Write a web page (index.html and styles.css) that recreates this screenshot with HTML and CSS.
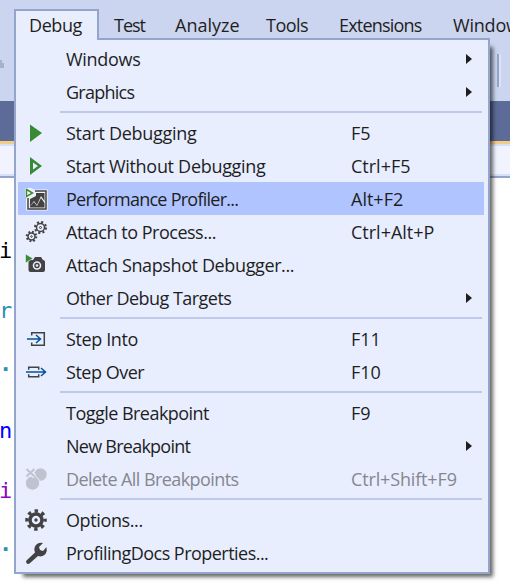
FILE: index.html
```html
<!DOCTYPE html>
<html lang="en">
<head>
<meta charset="utf-8">
<title>Debug menu</title>
<link rel="stylesheet" href="styles.css">
</head>
<body>
<div class="window">
  <header class="chrome"></header>
  <div class="tabstrip"></div>
  <div class="navbar"></div>
  <main class="editor">
    <span class="plain">i</span>
    <span class="type">r</span>
    <span class="type dot">·</span>
    <span class="keyword">n</span>
    <span class="purple">i</span>
    <span class="type dot">·</span>
  </main>
</div>
<svg class="grip" width="4" height="9" viewBox="0 0 4 9"><path d="M0 0h2v3h2v5H0z" fill="#a9afc4"/></svg>
<i class="toolbar-rule"></i>
<div class="overlay">
  <nav class="menubar">
    <span class="title active">Debug</span>
    <span class="title test">Test</span>
    <span class="title analyze">Analyze</span>
    <span class="title tools">Tools</span>
    <span class="title extensions">Extensions</span>
    <span class="title window-title">Window</span>
  </nav>
  <div class="menu">
    <div class="item"><span class="icon"></span><span class="label t3">Windows</span><span class="key"></span><i class="arrow"></i></div>
    <div class="item"><span class="icon"></span><span class="label t7">Graphics</span><span class="key"></span><i class="arrow"></i></div>
    <hr>
    <div class="item"><span class="icon"><svg width="24" height="24"><path d="M6 3.500L18 12L6 21z" fill="#388a34"/></svg></span><span class="label t3">Start Debugging</span><span class="key">F5</span></div>
    <div class="item"><span class="icon"><svg width="24" height="24"><path fill-rule="evenodd" d="M6 3L18 12L6 21zM9 8.500v7l5-3.500z" fill="#388a34"/></svg></span><span class="label t3">Start Without Debugging</span><span class="key">Ctrl+F5</span></div>
    <div class="item selected"><span class="icon"><svg width="24" height="24"><path d="M1 1h6l3 1.500h13.700v21H2V10H1z" fill="#f0f1f5"/><path d="M11 4h11v18H4V11" fill="none" stroke="#424242" stroke-width="1.500"/><path d="M6 12l6-3V6h8.500v8l-3.500-5-4 9-3-4-4 5z" fill="#424242"/><path d="M6 20.500v-1.500l4-4 3 4 4-8 3.500 5v4.500z" fill="#424242"/><path d="M2.500 2.500l6 3.500-6 3.500z" fill="#fff" stroke="#388a34" stroke-width="1.500"/></svg></span><span class="label t7">Performance Profiler...</span><span class="key">Alt+F2</span></div>
    <div class="item"><span class="icon"><svg width="24" height="24" fill="none" stroke="#424242"><circle cx="16.500" cy="7.500" r="4" stroke-width="1.500"/><circle cx="16.500" cy="7.500" r="5.500" stroke-width="2" stroke-dasharray="2.100 2.220"/><circle cx="16.500" cy="7.500" r="1" stroke-width="1"/><circle cx="7.500" cy="16.500" r="3.500" stroke-width="1.500"/><circle cx="7.500" cy="16.500" r="4.800" stroke-width="2" stroke-dasharray="1.800 1.970"/><circle cx="7.500" cy="16.500" r=".8" stroke-width="1"/></svg></span><span class="label t45">Attach to Process...</span><span class="key">Ctrl+Alt+P</span></div>
    <div class="item"><span class="icon"><svg width="24" height="24"><path d="M4.500 9q0-2 2-2H9l2-3h6l2 3q2 0 2 2v8q0 2-2 2H6.500q-2 0-2-2v-5z" fill="#424242"/><circle cx="13" cy="12.500" r="3.500" fill="#424242" stroke="#e8eefe" stroke-width="1.600"/><circle cx="13" cy="12.500" r="1.300" fill="#e8eefe"/><path d="M1.500 1l7.500 4.500-7.500 4.500z" fill="#388a34" stroke="#e8eefe" stroke-width=".6"/></svg></span><span class="label t4">Attach Snapshot Debugger...</span><span class="key"></span></div>
    <div class="item"><span class="icon"></span><span class="label t5">Other Debug Targets</span><span class="key"></span><i class="arrow"></i></div>
    <hr>
    <div class="item"><span class="icon"><svg width="24" height="24" fill="none"><path d="M7.700 8.500V5.700h12.600v12.600H7.700V15.500" stroke="#424242" stroke-width="1.500"/><path d="M3 12h13M12 8l4.500 4-4.500 4" stroke="#00539c" stroke-width="1.500"/></svg></span><span class="label t4">Step Into</span><span class="key">F11</span></div>
    <div class="item"><span class="icon"><svg width="24" height="24" fill="none"><path d="M4.700 9.700V7.200h10v2.500M4.700 14.300v2.500h10v-2.500" stroke="#424242" stroke-width="1.500"/><path d="M2 12h19M17 8l4.500 4-4.500 4" stroke="#00539c" stroke-width="1.500"/></svg></span><span class="label t45">Step Over</span><span class="key">F10</span></div>
    <hr>
    <div class="item"><span class="icon"></span><span class="label t5">Toggle Breakpoint</span><span class="key">F9</span></div>
    <div class="item"><span class="icon"></span><span class="label t7">New Breakpoint</span><span class="key"></span><i class="arrow"></i></div>
    <div class="item disabled"><span class="icon"><svg width="24" height="24"><circle cx="16.500" cy="7.500" r="6.200" fill="#bfc3cf"/><circle cx="8.500" cy="16" r="7.200" fill="#bfc3cf" stroke="#e8eefe"/><path d="M2.500 2l8 7.500M10.500 2l-8 7.500" stroke="#e8eefe" stroke-width="4.500"/><path d="M2.500 2l8 7.500M10.500 2l-8 7.500" stroke="#bfc3cf" stroke-width="2"/></svg></span><span class="label t55">Delete All Breakpoints</span><span class="key long">Ctrl+Shift+F9</span></div>
    <hr>
    <div class="item"><span class="icon"><svg width="24" height="24" fill="none" stroke="#424242"><circle cx="12" cy="12" r="6" stroke-width="3.500"/><circle cx="12" cy="12" r="9" stroke-width="3.500" stroke-dasharray="3.400 3.670" stroke-dashoffset="1.700"/><circle cx="12" cy="12" r="1.700" fill="#424242" stroke="none"/></svg></span><span class="label t4">Options...</span><span class="key"></span></div>
    <div class="item"><span class="icon"><svg width="24" height="24"><path d="M2.500 19.500L11 11.500Q9 6 13 3q3-2 6-1l-4 4 1 3 3 1 3.500-4q1 4-1 7-3 3.500-7.500 2l-8.500 7.500q-2 1-3-.5-1-1.300 0-2.500z" fill="#424242"/></svg></span><span class="label t5">ProfilingDocs Properties...</span><span class="key"></span></div>
  </div>
</div>
</body>
</html>
```

FILE: styles.css
```css
* { box-sizing: border-box; }
body { margin: 0; width: 510px; height: 584px; overflow: hidden; position: relative; background: #fff; font-family: "Open Sans", "Noto Sans", sans-serif; font-size: 18px; color: #1e1e1e; }
.chrome { height: 101px; background: #ccd5f0; }
.tabstrip { height: 43px; background: #5d6b99; border-bottom: 3px solid #f5cc84; }
.navbar { height: 34px; background: #f1f4fe; border-top: 2px solid #d5e1fa; border-bottom: 2px solid #93a5cb; box-shadow: inset 0 -2px #d5e1fa; }
.editor { display: flex; flex-direction: column; padding-top: 43px; font: 22px/60px "DejaVu Sans Mono", monospace; }
.editor span { height: 60px; line-height: 60px; margin-left: -1px; }
.editor .dot { line-height: 58px; font-weight: 700; }
.plain { color: #000; }
.type { color: #2b91af; }
.keyword { color: #0000ff; }
.purple { color: #8f08c4; }
.grip { position: absolute; left: 0; top: 60px; }
.toolbar-rule { position: absolute; left: 497px; top: 54px; width: 4px; height: 33px; background: #dbe2f6; border-left: 2px solid #93a5cb; }
.overlay { position: absolute; left: 14px; top: 9px; width: 510px; }
.menubar { display: flex; height: 29px; line-height: 32px; }
.title { flex: none; padding-left: 15px; white-space: nowrap; }
.active { width: 85px; height: 31px; padding-left: 13px; background: #e8eefe; border: 2px solid #93a5cb; border-bottom: 0; position: relative; z-index: 1; line-height: 28px; letter-spacing: -.4px; }
.test { width: 61px; letter-spacing: -1px; }
.analyze { width: 91px; }
.tools { width: 73px; letter-spacing: -.5px; }
.extensions { width: 114px; letter-spacing: -.8px; }
.window-title { letter-spacing: -.2px; }
.menu { width: 476px; height: 536px; padding: 2px; background: #e8eefe; border: 2px solid #93a5cb; box-shadow: 6px 6px 4px -3px rgba(0,0,0,.6); }
.item { display: flex; align-items: center; height: 33px; width: 466px; padding-top: 1px; line-height: 32px; white-space: nowrap; }
.icon { width: 48px; padding-left: 6px; height: 24px; }
.icon svg { display: block; }
.label { width: 285px; }
.t3 { letter-spacing: -.3px; }
.t4 { letter-spacing: -.38px; }
.t45 { letter-spacing: -.48px; }
.t5 { letter-spacing: -.53px; }
.t55 { letter-spacing: -.57px; }
.t7 { letter-spacing: -.75px; }
.key { width: 115px; }
.long { letter-spacing: -.15px; }
.arrow { border-left: 6px solid #1e1e1e; border-top: 5px solid transparent; border-bottom: 5px solid transparent; }
.selected { background: #b0c4ff; }
.disabled { color: #85878f; }
hr { height: 2px; margin: 3px 4px 3px 42px; border: 0; background: #bec9eb; }
```
